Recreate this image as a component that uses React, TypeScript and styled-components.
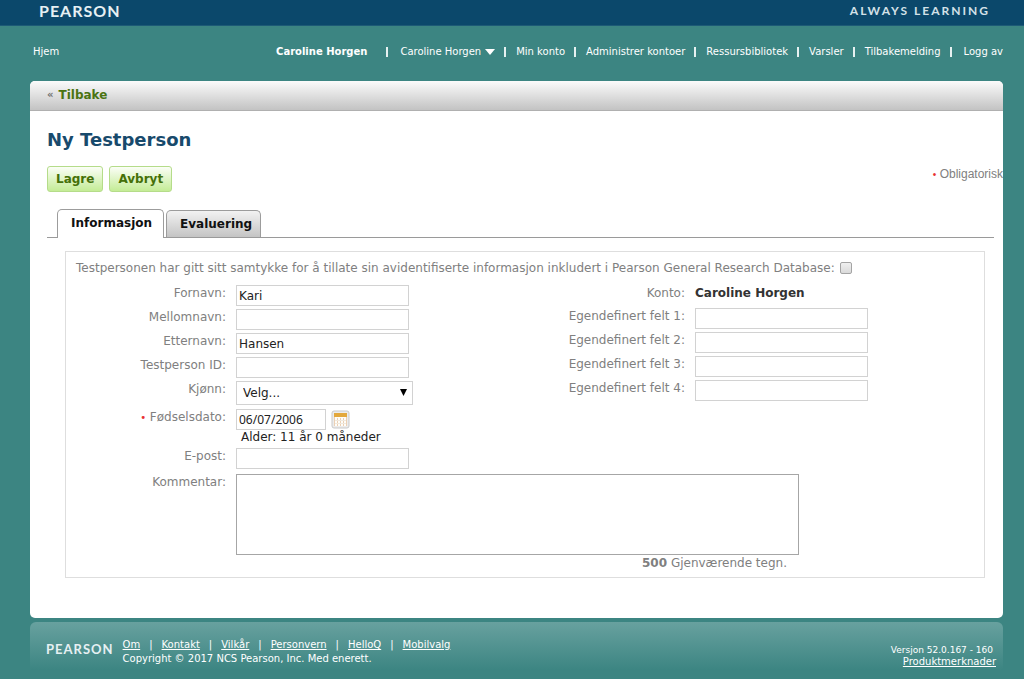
import React, { useState } from "react";
import styled, { createGlobalStyle } from "styled-components";

const GlobalStyle = createGlobalStyle`
  *, *::before, *::after { box-sizing: border-box; }
  body {
    margin: 0;
    background: #3c8582;
    font-family: "DejaVu Sans", Verdana, sans-serif;
    font-size: 12px;
    line-height: 16px;
    color: #808080;
  }
`;

const Page = styled.div`
  display: flex;
  flex-direction: column;
  min-height: 100vh;
`;

const Brand = styled.header`
  display: flex;
  justify-content: space-between;
  align-items: flex-start;
  height: 26px;
  padding: 1px 34px 0 39px;
  background: #0b486b;
  border-bottom: 1px solid #1d5a76;
  color: #e4eef3;
`;

const Wordmark = styled.span<{ $size: number }>`
  font-family: Lato, "Open Sans", sans-serif;
  font-size: ${(p) => p.$size}px;
  font-weight: 700;
  line-height: 20px;
  letter-spacing: 1px;
  color: #e6f0f3;
`;

const Tagline = styled.span`
  font-family: Lato, "Open Sans", sans-serif;
  font-size: 12px;
  font-weight: 700;
  line-height: 20px;
  letter-spacing: 2px;
  color: #d3e1e8;
`;

const Content = styled.div`
  display: flex;
  flex-direction: column;
  flex: 1;
  padding: 0 21px 0 30px;
`;

const TopNav = styled.nav`
  display: flex;
  justify-content: space-between;
  align-items: center;
  height: 55px;
  padding: 0 0 4px 3px;
  font-size: 10px;
  white-space: nowrap;
`;

const NavList = styled.div`
  display: flex;
  align-items: center;
`;

const NavLink = styled.a<{ $gap?: number }>`
  color: #fff;
  text-decoration: none;
  &:not(:first-child) {
    padding-left: ${(p) => p.$gap ?? 10}px;
  }
`;

const Account = styled.strong`
  margin-right: 19px;
  color: #fff;
`;

const NavBar = styled.span`
  width: 2px;
  height: 10px;
  background: #e6f1f1;
  a + & {
    margin-left: 9px;
  }
`;

const Caret = styled.svg`
  margin-left: 4px;
`;

const Panel = styled.main`
  overflow: hidden;
  background: #fff;
  border-radius: 5px;
`;

const BackBar = styled.div`
  display: flex;
  align-items: center;
  height: 30px;
  padding: 0 17px 2px;
  background: linear-gradient(#fbfbfb, #c3c3c3);
  border-bottom: 1px solid #b0b0b0;
`;

const BackLink = styled.a`
  display: flex;
  gap: 5px;
  font-weight: bold;
  color: #4b7412;
  text-decoration: none;
`;

const Chevrons = styled.span`
  color: #707070;
  font-size: 10px;
`;

const Body = styled.div`
  padding: 16px 9px 40px 17px;
`;

const Title = styled.h1`
  margin: 0;
  font-size: 18px;
  line-height: 26px;
  color: #184a6c;
`;

const Actions = styled.div`
  display: flex;
  align-items: flex-start;
  gap: 6px;
  margin-top: 13px;
`;

const GreenButton = styled.button`
  height: 26px;
  padding: 0 8px 1px;
  border: 1px solid #b5dc8a;
  border-radius: 3px;
  background: linear-gradient(#fbfef7, #c4ec96);
  font: bold 12px "DejaVu Sans", Verdana, sans-serif;
  color: #457008;
`;

const Required = styled.span`
  color: #e83030;
  font-size: 10px;
`;

const RequiredNote = styled.span`
  margin: 0 -9px 0 auto;
  font-family: "Liberation Sans", Arial, sans-serif;
  white-space: nowrap;
`;

const Tabs = styled.div`
  display: flex;
  align-items: flex-end;
  gap: 2px;
  margin-top: 17px;
  padding-left: 10px;
  border-bottom: 1px solid #9a9a9a;
`;

const Tab = styled.button<{ $active?: boolean }>`
  height: ${(p) => (p.$active ? 29 : 27)}px;
  margin-bottom: ${(p) => (p.$active ? -1 : 0)}px;
  padding: 0 ${(p) => (p.$active ? 11 : 8)}px ${(p) => (p.$active ? 2 : 0)}px 13px;
  border: 1px solid #9c9c9c;
  border-bottom: 0;
  border-radius: 5px 5px 0 0;
  background: ${(p) => (p.$active ? "#fff" : "linear-gradient(#f2f2f2, #c4c4c4)")};
  font: bold 12px "DejaVu Sans", Verdana, sans-serif;
  color: #111;
`;

const Form = styled.form`
  margin: 13px 9px 0 18px;
  padding: 7px 0 6px;
  border: 1px solid #dedede;
`;

const Consent = styled.div`
  display: flex;
  align-items: center;
  gap: 5px;
  height: 18px;
  padding-left: 10px;
  white-space: nowrap;
`;

const Checkbox = styled.input`
  appearance: none;
  width: 12px;
  height: 12px;
  margin: 0;
  border: 1px solid #a4a4a4;
  border-radius: 2px;
  background: linear-gradient(#f0f0f0, #dadada);
  &:checked {
    background: #6b6b6b;
  }
`;

const Columns = styled.div`
  display: grid;
  grid-template-columns: 1fr 1fr;
  margin-top: 8px;
`;

const Fields = styled.div`
  display: flex;
  flex-direction: column;
  gap: 3px;
`;

const Row = styled.div<{ $space?: number }>`
  display: grid;
  grid-template-columns: 160px minmax(0, 1fr);
  column-gap: 10px;
  align-items: start;
  margin-top: ${(p) => p.$space ?? 0}px;
`;

const Label = styled.label`
  text-align: right;
`;

const Input = styled.input<{ $short?: boolean }>`
  width: ${(p) => (p.$short ? 90 : 173)}px;
  height: 21px;
  padding: 0 2px;
  border: 1px solid #d2d2d2;
  background: #fff;
  font-family: ${(p) => (p.$short ? '"Noto Sans", sans-serif' : '"DejaVu Sans", Verdana, sans-serif')};
  font-size: 12px;
  color: #222;
`;

const SelectBox = styled.div`
  position: relative;
  width: 177px;
  svg {
    position: absolute;
    top: 8px;
    right: 6px;
    pointer-events: none;
  }
`;

const Select = styled.select`
  display: block;
  appearance: none;
  width: 100%;
  height: 24px;
  padding: 0 6px;
  border: 1px solid #d2d2d2;
  border-radius: 0;
  background: #fff;
  font: 12px "DejaVu Sans", Verdana, sans-serif;
  color: #222;
`;

const DateLine = styled.div`
  display: flex;
  align-items: center;
  gap: 5px;
`;

const IconButton = styled.button`
  display: flex;
  padding: 0;
  border: 0;
  background: none;
`;

const Age = styled.div`
  padding-left: 5px;
  line-height: 15px;
  color: #222;
`;

const Value = styled.strong`
  color: #333;
`;

const Comment = styled.div`
  max-width: 563px;
  margin-right: 9px;
`;

const TextArea = styled.textarea`
  display: block;
  width: 100%;
  height: 81px;
  border: 1px solid #a6a6a6;
  resize: none;
  font: 12px "DejaVu Sans", Verdana, sans-serif;
`;

const Counter = styled.div`
  padding-right: 12px;
  text-align: right;
`;

const Footer = styled.footer`
  display: flex;
  flex: 1;
  align-items: flex-start;
  margin-top: 4px;
  padding: 16px 7px 11px 16px;
  min-height: 56px;
  border-radius: 6px 6px 0 0;
  background: linear-gradient(#68a19f, #3c8582 48px);
  color: #fff;
  font-size: 10px;
  line-height: 14px;
`;

const FooterText = styled.div`
  margin-left: 9px;
`;

const FooterLinks = styled.div`
  display: flex;
  gap: 9px;
`;

const FooterLink = styled.a`
  color: #fff;
`;

const Version = styled.div`
  display: flex;
  flex-direction: column;
  align-items: flex-end;
  margin: 7px 0 0 auto;
  line-height: 11px;
`;

const VersionNumber = styled.span`
  padding-right: 3px;
  font-size: 9px;
`;

const FooterMark = styled.div`
  padding-top: 1px;
`;

const navItems = ["Min konto", "Administrer kontoer", "Ressursbibliotek", "Varsler", "Tilbakemelding"];
const footerItems = ["Om", "Kontakt", "Vilkår", "Personvern", "HelloQ", "Mobilvalg"];

function TextField({ id, label, initial = "", space }: { id: string; label: string; initial?: string; space?: number }) {
  return (
    <Row $space={space}>
      <Label htmlFor={id}>{label}:</Label>
      <Input id={id} type="text" defaultValue={initial} />
    </Row>
  );
}

function CalendarIcon() {
  return (
    <svg width="19" height="19" viewBox="0 0 19 19" aria-hidden="true">
      <rect x="1" y="1" width="17" height="17" rx="2" fill="#ececec" stroke="#c9c9c9" />
      <rect x="3" y="4" width="13" height="12" fill="#fffdf8" />
      <rect x="3" y="3" width="13" height="4" fill="#e3a83c" />
      <path d="M3.500 7v9M6.500 8v8M9.500 8v8M12.500 8v8M15.500 7v9" stroke="#ecd0b4" />
      <path d="M4 10.500h11M4 13.500h11" stroke="#efe9df" />
    </svg>
  );
}

export default function App() {
  const [comment, setComment] = useState("");

  return (
    <Page>
      <GlobalStyle />
      <Brand>
        <Wordmark $size={16}>PEARSON</Wordmark>
        <Tagline>ALWAYS LEARNING</Tagline>
      </Brand>
      <Content>
        <TopNav>
          <NavLink href="#hjem">Hjem</NavLink>
          <NavList>
            <Account>Caroline Horgen</Account>
            <NavBar />
            <NavLink href="#bruker" $gap={12}>
              Caroline Horgen
              <Caret width="10" height="6" viewBox="0 0 10 6" aria-hidden="true">
                <path d="M0 0h10L5 6z" fill="#fff" />
              </Caret>
            </NavLink>
            {navItems.map((item) => (
              <React.Fragment key={item}>
                <NavBar />
                <NavLink href="#meny">{item}</NavLink>
              </React.Fragment>
            ))}
            <NavBar />
            <NavLink href="#logg-av" $gap={12}>Logg av</NavLink>
          </NavList>
        </TopNav>

        <Panel>
          <BackBar>
            <BackLink href="#tilbake">
              <Chevrons>«</Chevrons>
              Tilbake
            </BackLink>
          </BackBar>
          <Body>
            <Title>Ny Testperson</Title>
            <Actions>
              <GreenButton type="submit" form="testperson">Lagre</GreenButton>
              <GreenButton type="button">Avbryt</GreenButton>
              <RequiredNote>
                <Required>•</Required> Obligatorisk
              </RequiredNote>
            </Actions>
            <Tabs role="tablist">
              <Tab type="button" role="tab" aria-selected="true" $active>Informasjon</Tab>
              <Tab type="button" role="tab" aria-selected="false">Evaluering</Tab>
            </Tabs>

            <Form id="testperson" onSubmit={(e) => e.preventDefault()}>
              <Consent>
                <label htmlFor="samtykke">
                  Testpersonen har gitt sitt samtykke for å tillate sin avidentifiserte informasjon inkludert i Pearson General Research Database:
                </label>
                <Checkbox id="samtykke" type="checkbox" />
              </Consent>
              <Columns>
                <Fields>
                  <TextField id="fornavn" label="Fornavn" initial="Kari" />
                  <TextField id="mellomnavn" label="Mellomnavn" />
                  <TextField id="etternavn" label="Etternavn" initial="Hansen" />
                  <TextField id="testperson-id" label="Testperson ID" />
                  <Row>
                    <Label htmlFor="kjonn">Kjønn:</Label>
                    <SelectBox>
                      <Select id="kjonn">
                        <option>Velg...</option>
                      </Select>
                      <svg width="7" height="7" viewBox="0 0 7 7" aria-hidden="true">
                        <path d="M0 0h7L3.500 7z" fill="#000" />
                      </svg>
                    </SelectBox>
                  </Row>
                  <Row $space={1}>
                    <Label htmlFor="fodselsdato">
                      <Required>•</Required> Fødselsdato:
                    </Label>
                    <div>
                      <DateLine>
                        <Input id="fodselsdato" type="text" defaultValue="06/07/2006" $short />
                        <IconButton type="button" aria-label="Velg dato">
                          <CalendarIcon />
                        </IconButton>
                      </DateLine>
                      <Age>Alder: 11 år 0 måneder</Age>
                    </div>
                  </Row>
                  <TextField id="epost" label="E-post" />
                </Fields>
                <Fields>
                  <Row>
                    <Label as="span">Konto:</Label>
                    <Value>Caroline Horgen</Value>
                  </Row>
                  <TextField id="felt1" label="Egendefinert felt 1" space={4} />
                  <TextField id="felt2" label="Egendefinert felt 2" />
                  <TextField id="felt3" label="Egendefinert felt 3" />
                  <TextField id="felt4" label="Egendefinert felt 4" />
                </Fields>
              </Columns>
              <Row $space={5}>
                <Label htmlFor="kommentar">Kommentar:</Label>
                <Comment>
                  <TextArea id="kommentar" maxLength={500} value={comment} onChange={(e) => setComment(e.target.value)} />
                  <Counter>
                    <strong>{500 - comment.length}</strong> Gjenværende tegn.
                  </Counter>
                </Comment>
              </Row>
            </Form>
          </Body>
        </Panel>

        <Footer>
          <FooterMark>
            <Wordmark $size={13}>PEARSON</Wordmark>
          </FooterMark>
          <FooterText>
            <FooterLinks>
              {footerItems.map((item, i) => (
                <React.Fragment key={item}>
                  {i > 0 && <span>|</span>}
                  <FooterLink href="#bunn">{item}</FooterLink>
                </React.Fragment>
              ))}
            </FooterLinks>
            Copyright © 2017 NCS Pearson, Inc. Med enerett.
          </FooterText>
          <Version>
            <VersionNumber>Versjon 52.0.167 - 160</VersionNumber>
            <FooterLink href="#produktmerknader">Produktmerknader</FooterLink>
          </Version>
        </Footer>
      </Content>
    </Page>
  );
}
